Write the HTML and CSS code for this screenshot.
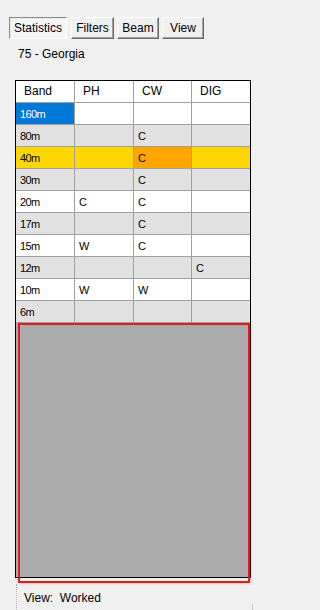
FILE: index.html
```html
<!DOCTYPE html>
<html>
<head>
<meta charset="utf-8">
<link rel="stylesheet" href="styles.css">
</head>
<body>
<div class="window">
  <div class="tabs">
    <div class="tab selected">Statistics</div>
    <div class="tab t-filters">Filters</div>
    <div class="tab t-beam">Beam</div>
    <div class="tab t-view">View</div>
  </div>
  <div class="region">75 - Georgia</div>
  <div class="grid">
    <div class="row head">
      <div class="cell">Band</div><div class="cell">PH</div><div class="cell">CW</div><div class="cell">DIG</div>
    </div>
    <div class="row white">
      <div class="cell sel">160m</div><div class="cell"></div><div class="cell"></div><div class="cell"></div>
    </div>
    <div class="row gray">
      <div class="cell">80m</div><div class="cell"></div><div class="cell">C</div><div class="cell"></div>
    </div>
    <div class="row gold">
      <div class="cell">40m</div><div class="cell"></div><div class="cell orange">C</div><div class="cell"></div>
    </div>
    <div class="row gray">
      <div class="cell">30m</div><div class="cell"></div><div class="cell">C</div><div class="cell"></div>
    </div>
    <div class="row white">
      <div class="cell">20m</div><div class="cell">C</div><div class="cell">C</div><div class="cell"></div>
    </div>
    <div class="row gray">
      <div class="cell">17m</div><div class="cell"></div><div class="cell">C</div><div class="cell"></div>
    </div>
    <div class="row white">
      <div class="cell">15m</div><div class="cell">W</div><div class="cell">C</div><div class="cell"></div>
    </div>
    <div class="row gray">
      <div class="cell">12m</div><div class="cell"></div><div class="cell"></div><div class="cell">C</div>
    </div>
    <div class="row white">
      <div class="cell">10m</div><div class="cell">W</div><div class="cell">W</div><div class="cell"></div>
    </div>
    <div class="row gray">
      <div class="cell">6m</div><div class="cell"></div><div class="cell"></div><div class="cell"></div>
    </div>
    <div class="empty"></div>
  </div>
  <div class="status"><span class="status-text">View:&nbsp; Worked</span></div>
  <div class="grip"></div>
  <div class="highlight"></div>
</div>
</body>
</html>
```

FILE: styles.css
```css
html, body {
  margin: 0;
  padding: 0;
  background: #f0f0f0;
}
body {
  font-family: "Liberation Sans", Arial, sans-serif;
  font-size: 12px;
  color: #000;
}
.window {
  position: relative;
  width: 260px;
  height: 610px;
  overflow: hidden;
}
.tabs {
  display: flex;
  gap: 3px;
  padding: 17px 0 0 9px;
}
.tab {
  box-sizing: border-box;
  height: 22px;
  line-height: 20px;
  text-align: center;
  border: 1px solid;
  border-color: #ffffff #696969 #696969 #ffffff;
  box-shadow: inset -1px -1px 0 #a0a0a0;
  background: #f0f0f0;
}
.tab.selected {
  width: 58px;
  margin-right: 1px;
  border-color: #8c8c8c #ffffff #ffffff #8c8c8c;
  box-shadow: inset 1px 1px 0 #e8e8e8;
  background: #f5f5f5;
  line-height: 21px;
}
.t-filters { width: 43px; }
.t-beam { width: 42px; }
.t-view { width: 42px; }
.region {
  margin-top: 8px;
  padding-left: 18px;
  height: 15px;
  line-height: 15px;
}
.grid {
  box-sizing: border-box;
  margin: 18px 0 0 15px;
  width: 236px;
  height: 498px;
  border: 1px solid #000;
  display: flex;
  flex-direction: column;
  background: #fff;
}
.row {
  display: grid;
  grid-template-columns: 59px 59px 58px 58px;
  height: 22px;
  flex: none;
}
.cell {
  box-sizing: border-box;
  border-right: 1px solid #a0a0a0;
  border-bottom: 1px solid #a0a0a0;
  padding-left: 4px;
  font-size: 11px;
  letter-spacing: -0.6px;
  line-height: 23px;
  white-space: nowrap;
  overflow: hidden;
}
.cell:last-child {
  border-right: none;
}
.head .cell {
  padding-left: 8px;
  font-size: 12px;
  letter-spacing: 0;
  line-height: 21px;
  background: #fff;
}
.white .cell { background: #ffffff; }
.gray .cell { background: #e1e1e1; }
.gold .cell { background: #ffd700; }
.gold .cell.orange { background: #ffa500; }
.cell.sel {
  background: #0078d7 !important;
  color: #fff;
}
.empty {
  flex: 1;
  background: #ababab;
}
.status {
  height: 32px;
  margin-left: 16px;
  margin-top: 6px;
  border-left: 1px dotted #b4b4b4;
  padding-left: 7px;
}
.status-text {
  display: block;
  line-height: 15px;
  padding-top: 7px;
}
.grip {
  position: absolute;
  left: 252px;
  top: 604px;
  width: 1px;
  height: 6px;
  background: #c8c8c8;
}
.highlight {
  position: absolute;
  left: 18px;
  top: 323px;
  width: 232px;
  height: 260px;
  box-sizing: border-box;
  border: 2px solid #d8201f;
  box-shadow: 1px 1px 2px rgba(216, 32, 31, 0.25);
}
```
